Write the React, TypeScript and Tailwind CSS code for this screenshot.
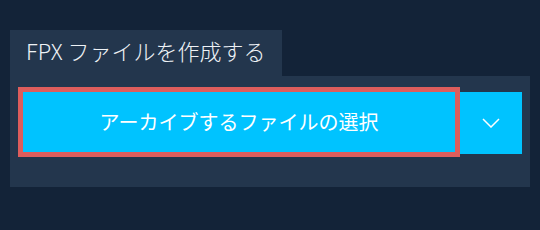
export default function App() {
  return (
    <div
      className="w-[540px] h-[230px] bg-[#132338] pt-[30px] px-[10px]"
      style={{ fontFamily: '"Noto Sans CJK JP", "Noto Sans", sans-serif' }}
    >
      {/* Tab */}
      <div className="w-[272px] h-[46px] bg-[#23364d] pl-[16px] pb-[6px] flex items-center text-[22px] font-light text-[#eef2f6] leading-none">
        FPX ファイルを作成する
      </div>

      {/* Panel */}
      <div className="h-[111px] bg-[#23364d] pt-[11px] pl-[8px] pr-[8px]">
        <div className="flex items-start">
          <button className="w-[442px] h-[70px] border-[5px] border-[#dd5d5c] bg-[#00c3ff] text-white text-[20px] leading-none flex items-center justify-center">
            アーカイブするファイルの選択
          </button>
          <button className="mt-[5px] w-[62px] h-[62px] bg-[#00c3ff] flex items-center justify-center">
            <svg width="18" height="10" viewBox="0 0 18 10" fill="none">
              <polyline points="1,1 9,9 17,1" stroke="white" strokeWidth="1.5" />
            </svg>
          </button>
        </div>
      </div>
    </div>
  )
}
